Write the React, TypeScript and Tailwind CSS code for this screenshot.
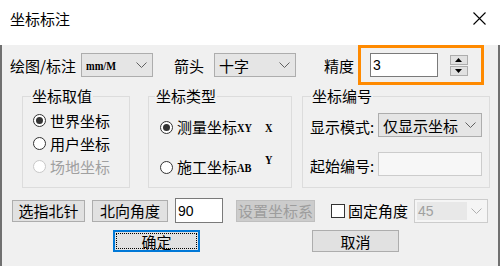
import React from 'react';

const Chevron = ({ color = '#606060' }: { color?: string }) => (
  <svg width="11" height="6" viewBox="0 0 11 6" className="shrink-0">
    <path d="M0.5 0.5 L5.5 5.5 L10.5 0.5" fill="none" stroke={color} strokeWidth="1" />
  </svg>
);

const Radio = ({ checked, disabled, label, suffix }: { checked?: boolean; disabled?: boolean; label: string; suffix?: string }) => (
  <div className={`flex items-center ${disabled ? 'text-[#a0a0a0]' : 'text-black'}`}>
    <div
      className={`w-[13px] h-[13px] mr-[4px] rounded-full border bg-white flex items-center justify-center shrink-0 ${
        disabled ? 'border-[#c8c8c8]' : 'border-[#333333]'
      }`}
    >
      {checked && <div className="w-[7px] h-[7px] rounded-full bg-[#333333]" />}
    </div>
    <span className="leading-[20px]">{label}</span>
    {suffix && (
      <span className="inline-block font-['Liberation_Serif',serif] font-bold text-[13px] leading-[20px] pt-[2px] scale-x-[0.8] origin-left">
        {suffix}
      </span>
    )}
  </div>
);

const Combo = ({ text, w, small }: { text: string; w: string; small?: boolean }) => (
  <div className={`${w} h-[24px] bg-[#e5e5e5] border border-[#adadad] flex items-center justify-between pl-[4px] pr-[5px]`}>
    <span
      className={
        small
          ? "inline-block font-['Liberation_Serif',serif] font-bold text-[13px] leading-none scale-x-[0.8] origin-left"
          : 'leading-none'
      }
    >
      {text}
    </span>
    <Chevron />
  </div>
);

const Button = ({ label, w }: { label: string; w: string }) => (
  <div className={`${w} h-[22px] bg-[#e1e1e1] border border-[#adadad] flex items-center justify-center leading-none`}>
    {label}
  </div>
);

// windows style group box: header line with caption, then the framed body
const Group = ({ title, w, lead, children }: { title: string; w: string; lead: string; children: React.ReactNode }) => (
  <div className={`${w} h-[102px] flex flex-col`}>
    <div className="h-[20px] flex">
      <div className={`${lead} h-[10px] self-end border-l border-t border-[#dcdcdc]`} />
      <span className="px-[1px] leading-[20px]">{title}</span>
      <div className="flex-1 h-[10px] self-end border-r border-t border-[#dcdcdc]" />
    </div>
    <div className="flex-1 border-x border-b border-[#dcdcdc]">{children}</div>
  </div>
);

export default function App() {
  return (
    <div className="w-[500px] h-[266px] overflow-hidden font-['Noto_Sans_CJK_SC',sans-serif] text-[15px] text-black">
      {/* title bar */}
      <div className="h-[37px] bg-white flex items-center justify-between pl-[10px] pr-[14px]">
        <span className="leading-none">坐标标注</span>
        <svg width="13" height="13" viewBox="0 0 13 13">
          <path d="M0.5 0.5 L12.5 12.5 M12.5 0.5 L0.5 12.5" stroke="#000" strokeWidth="1.1" />
        </svg>
      </div>

      <div className="h-[229px] bg-[#f0f0f0] border-x-2 border-b-2 border-[#707070]">
        {/* row 1 */}
        <div className="mt-[8px] h-[40px] flex items-center pl-[8px]">
          <span className="leading-none">绘图/标注</span>
          <div className="ml-[5px]">
            <Combo text="mm/M" w="w-[72px]" small />
          </div>
          <span className="ml-[21px] leading-none">箭头</span>
          <div className="ml-[10px]">
            <Combo text="十字" w="w-[82px]" />
          </div>
          <span className="ml-[28px] leading-none">精度</span>
          <div className="ml-[4px] w-[126px] h-[40px] border-[3px] border-[#ff8a00] flex items-center pl-[9px]">
            <div className="w-[68px] h-[24px] bg-white border border-[#7a7a7a] flex items-center pl-[2px] font-['Liberation_Sans',sans-serif] text-[14px] leading-none">
              3
            </div>
            <div className="ml-[12px] flex flex-col gap-[1px]">
              <div className="w-[18px] h-[10px] bg-[#e1e1e1] border border-[#adadad] flex items-center justify-center">
                <svg width="7" height="4" viewBox="0 0 7 4"><path d="M3.5 0 L7 4 L0 4 Z" fill="#000" /></svg>
              </div>
              <div className="w-[18px] h-[10px] bg-[#e1e1e1] border border-[#adadad] flex items-center justify-center">
                <svg width="7" height="4" viewBox="0 0 7 4"><path d="M0 0 L7 0 L3.5 4 Z" fill="#000" /></svg>
              </div>
            </div>
          </div>
        </div>

        {/* group boxes */}
        <div className="mt-[1px] flex pl-[20px]">
          <Group title="坐标取值" w="w-[108px]" lead="w-[9px]">
            <div className="pt-[3px] pl-[10px] flex flex-col">
              <div className="h-[23px] flex items-center"><Radio checked label="世界坐标" /></div>
              <div className="h-[23px] flex items-center"><Radio label="用户坐标" /></div>
              <div className="h-[23px] flex items-center"><Radio disabled label="场地坐标" /></div>
            </div>
          </Group>

          <div className="ml-[18px]">
            <Group title="坐标类型" w="w-[144px]" lead="w-[7px]">
              <div className="pt-[9px] pl-[11px] pr-[18px] flex flex-col gap-[16px]">
                <div className="h-[24px] flex items-center justify-between">
                  <Radio checked label="测量坐标" suffix="XY" />
                  <span className="inline-block font-['Liberation_Serif',serif] font-bold text-[13px] leading-none scale-x-[0.8]">X</span>
                </div>
                <div className="h-[24px] flex items-center justify-between">
                  <Radio label="施工坐标" suffix="AB" />
                  <span className="inline-block self-start font-['Liberation_Serif',serif] font-bold text-[13px] leading-[10px] scale-x-[0.8]">Y</span>
                </div>
              </div>
            </Group>
          </div>

          <div className="ml-[10px]">
            <Group title="坐标编号" w="w-[188px]" lead="w-[9px]">
              <div className="pt-[7px] pl-[7px] flex flex-col gap-[15px]">
                <div className="h-[24px] flex items-center">
                  <span className="w-[68px] leading-none pt-[2px]">显示模式:</span>
                  <Combo text="仅显示坐标" w="w-[104px]" />
                </div>
                <div className="h-[24px] flex items-center">
                  <span className="w-[68px] leading-none pt-[2px]">起始编号:</span>
                  <div className="w-[104px] h-[24px] bg-[#f7f7f7] border border-[#cccccc]" />
                </div>
              </div>
            </Group>
          </div>
        </div>

        {/* bottom row */}
        <div className="mt-[10px] h-[25px] flex items-center pl-[10px]">
          <Button label="选指北针" w="w-[73px]" />
          <div className="ml-[7px]"><Button label="北向角度" w="w-[76px]" /></div>
          <div className="ml-[7px] w-[48px] h-[25px] bg-white border border-[#7a7a7a] flex items-center pl-[2px] font-['Liberation_Sans',sans-serif] text-[14px] leading-none">
            90
          </div>
          <div className="ml-[13px] w-[79px] h-[22px] bg-[#cccccc] border border-[#bfbfbf] flex items-center justify-center text-[#9d9d9d] leading-none">
            设置坐标系
          </div>
          <div className="ml-[16px] w-[14px] h-[14px] bg-white border border-[#333333]" />
          <span className="ml-[3px] leading-none">固定角度</span>
          <div className="ml-[6px] w-[74px] h-[24px] bg-[#f5f5f5] border border-[#cccccc] flex items-center justify-between pl-[2px] pr-[5px]">
            <div className="w-[50px] h-[18px] bg-[#e8e8e8] flex items-center pl-[1px] font-['Liberation_Sans',sans-serif] text-[14px] text-[#a0a0a0] leading-none">
              45
            </div>
            <Chevron color="#b0b0b0" />
          </div>
        </div>

        {/* ok / cancel */}
        <div className="mt-[7px] flex pl-[111px]">
          <div className="w-[87px] h-[22px] bg-[#e1e1e1] border-2 border-[#0078d7] flex">
            <div className="flex-1 m-[1px] border border-dotted border-black flex items-center justify-center leading-none">
              确定
            </div>
          </div>
          <div className="ml-[112px]"><Button label="取消" w="w-[87px]" /></div>
        </div>
      </div>
    </div>
  );
}
